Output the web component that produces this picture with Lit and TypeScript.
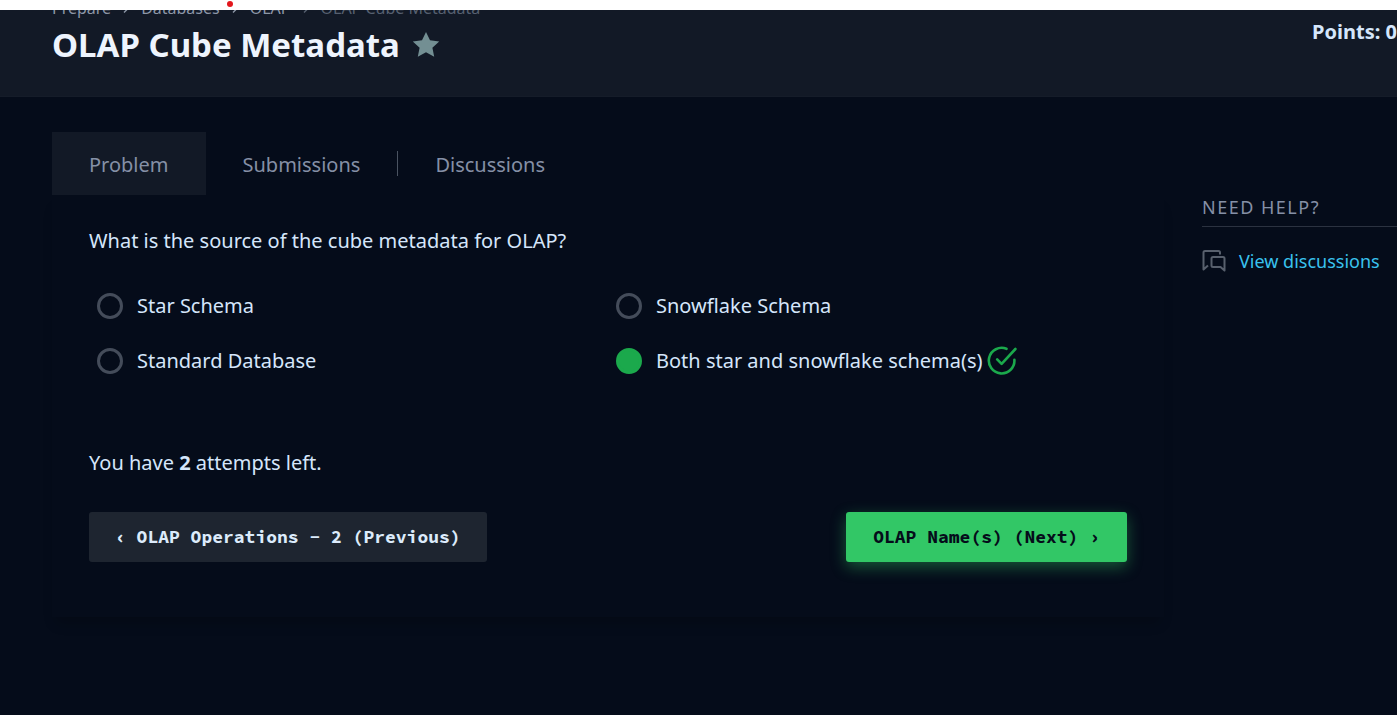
import { LitElement, html, css, svg } from "lit";
import { customElement, state } from "lit/decorators.js";

const chevron = html`<svg class="chevron" viewBox="0 0 8 12" aria-hidden="true">
  <path d="M2 1.5 6.5 6 2 10.5" fill="none" stroke="currentColor" stroke-width="1.4" />
</svg>`;

const checkIcon = svg`<svg class="check" viewBox="0 0 30 30" aria-hidden="true">
  <g fill="none" stroke="currentColor" stroke-width="2.6" stroke-linecap="round" stroke-linejoin="round">
    <path d="M19.5 2.8 A12.8 12.8 0 1 0 27.4 13.8 V15" />
    <path d="M10.2 13.4 L14.6 17.8 L28.4 3" />
  </g>
</svg>`;

const OPTIONS = [
  "Star Schema",
  "Snowflake Schema",
  "Standard Database",
  "Both star and snowflake schema(s)",
];
const CORRECT = 3;

@customElement("app-root")
export class AppRoot extends LitElement {
  @state() private selected = CORRECT;

  static styles = css`
    :host {
      display: flex;
      flex-direction: column;
      min-height: 100vh;
      background: #050c1a;
      color: #d5e6fb;
      font: 20px/30px "Noto Sans", sans-serif;
      overflow-x: hidden;
    }
    * { box-sizing: border-box; }
    a { color: inherit; text-decoration: none; }
    h1, h2, p { margin: 0; }
    .strip {
      display: flex;
      height: 10px;
      padding-left: 227px;
      padding-top: 1px;
      background: #fff;
    }
    .dot { width: 6px; height: 6px; border-radius: 50%; background: #e3161c; }
    .header {
      display: flex;
      justify-content: space-between;
      height: 87px;
      padding-left: 52px;
      overflow: hidden;
      background: #121926;
      border-bottom: 1px solid #151c29;
    }
    .crumbs {
      display: flex;
      align-items: center;
      margin-top: -14px;
      font-size: 16px;
      line-height: 24px;
      color: #8d97a8;
    }
    .chevron { width: 8px; height: 12px; margin: 0 11px; }
    .current { display: flex; align-items: center; color: #566070; }
    .title-row { display: flex; align-items: center; gap: 12px; }
    h1 { font-size: 33px; line-height: 50px; font-weight: 700; color: #eef4fd; }
    .star-button { padding: 0; border: 0; background: none; display: flex; color: #738f93; }
    .star { width: 28px; height: 28px; }
    .points { padding-top: 7px; font-weight: 700; white-space: nowrap; }
    .body {
      display: grid;
      grid-template-columns: minmax(0, 1fr) 195px;
      gap: 38px;
      padding: 35px 0 36px 52px;
    }
    .tabs { display: flex; align-items: center; height: 63px; color: #8590a6; }
    .tab { height: 63px; padding: 2px 37px 0; line-height: 61px; }
    .active { background: #121926; }
    .divider { width: 1px; height: 25px; background: #4a5361; }
    .card {
      padding: 31px 37px 55px;
      box-shadow: 0 10px 12px -4px rgba(0, 0, 0, 0.2);
    }
    .options {
      display: grid;
      grid-template-columns: 1fr 1fr;
      margin: 22px 0 60px;
      padding: 0;
      border: 0;
    }
    .option { display: flex; align-items: center; height: 55px; padding-left: 8px; }
    .radio {
      appearance: none;
      width: 26px;
      height: 26px;
      margin: 0 14px 0 0;
      border: 3px solid #444c5a;
      border-radius: 50%;
    }
    .radio:checked { border-color: #1ba94c; background: #1ba94c; }
    .check { width: 30px; height: 30px; margin-left: 4px; color: #1ba94c; }
    .nav { display: flex; justify-content: space-between; margin-top: 34px; }
    .button {
      padding: 0 26px;
      border: 0;
      border-radius: 3px;
      font: bold 18px/50px "Source Code Pro", "DejaVu Sans Mono", monospace;
      white-space: pre;
    }
    .previous { background: #1e2530; color: #dcebfb; }
    .next {
      padding: 0 27px;
      background: #32c766;
      color: #050c1a;
      box-shadow: 0 5px 15px rgba(50, 199, 102, 0.4);
    }
    .side { padding-top: 61px; }
    .side-title {
      padding-bottom: 5px;
      border-bottom: 1px solid #2b3240;
      font-size: 18px;
      line-height: 28px;
      font-weight: 400;
      letter-spacing: 1.5px;
      color: #8590a6;
    }
    .help {
      display: flex;
      align-items: center;
      gap: 13px;
      margin-top: 20px;
      font-size: 18px;
      line-height: 28px;
      color: #39c2ee;
      white-space: nowrap;
    }
    .bubbles { width: 24px; height: 24px; color: #58606d; }
  `;

  render() {
    return html`
      <div class="strip"><span class="dot"></span></div>
      <header class="header">
        <div>
          <nav class="crumbs" aria-label="Breadcrumb">
            <a href="#">Prepare</a>${chevron}<a href="#">Databases</a>${chevron}<a href="#">OLAP</a>
            <span class="current">${chevron}OLAP Cube Metadata</span>
          </nav>
          <div class="title-row">
            <h1>OLAP Cube Metadata</h1>
            <button class="star-button" aria-label="Bookmark">
              <svg class="star" viewBox="0 0 28 28">
                <path fill="currentColor" d="M14 1 18 9.3 27.2 10.4 20.4 16.7 22.2 25.7 14 21.2 5.8 25.7 7.6 16.7 .8 10.4 10 9.3Z" />
              </svg>
            </button>
          </div>
        </div>
        <div class="points">Points: 0</div>
      </header>
      <div class="body">
        <main>
          <nav class="tabs">
            <a class="tab active" href="#">Problem</a>
            <a class="tab" href="#">Submissions</a>
            <span class="divider"></span>
            <a class="tab" href="#">Discussions</a>
          </nav>
          <section class="card">
            <p id="question">What is the source of the cube metadata for OLAP?</p>
            <fieldset class="options" aria-labelledby="question">
              ${OPTIONS.map(
                (text, i) => html`<label class="option">
                  <input class="radio" type="radio" name="answer"
                    .checked=${this.selected === i}
                    @change=${() => (this.selected = i)} />
                  <span>${text}</span>${i === CORRECT ? checkIcon : ""}
                </label>`
              )}
            </fieldset>
            <p>You have <strong>2</strong> attempts left.</p>
            <div class="nav">
              <button class="button previous">‹ OLAP Operations - 2 (Previous)</button>
              <button class="button next">OLAP Name(s) (Next) ›</button>
            </div>
          </section>
        </main>
        <aside class="side">
          <h2 class="side-title">NEED HELP?</h2>
          <a class="help" href="#">
            <svg class="bubbles" viewBox="0 0 24 24" aria-hidden="true">
              <g fill="none" stroke="currentColor" stroke-width="2" stroke-linejoin="round">
                <path d="M18 5.5V3.5Q18 2 16.5 2H3Q1.5 2 1.5 3.5V20.5L6 16.5" />
                <path d="M22.5 21.5V9.5Q22.5 8 21 8H11Q9.5 8 9.5 9.5V16.5Q9.5 18 11 18H18.5Z" />
              </g>
            </svg>
            <span>View discussions</span>
          </a>
        </aside>
      </div>
    `;
  }
}
